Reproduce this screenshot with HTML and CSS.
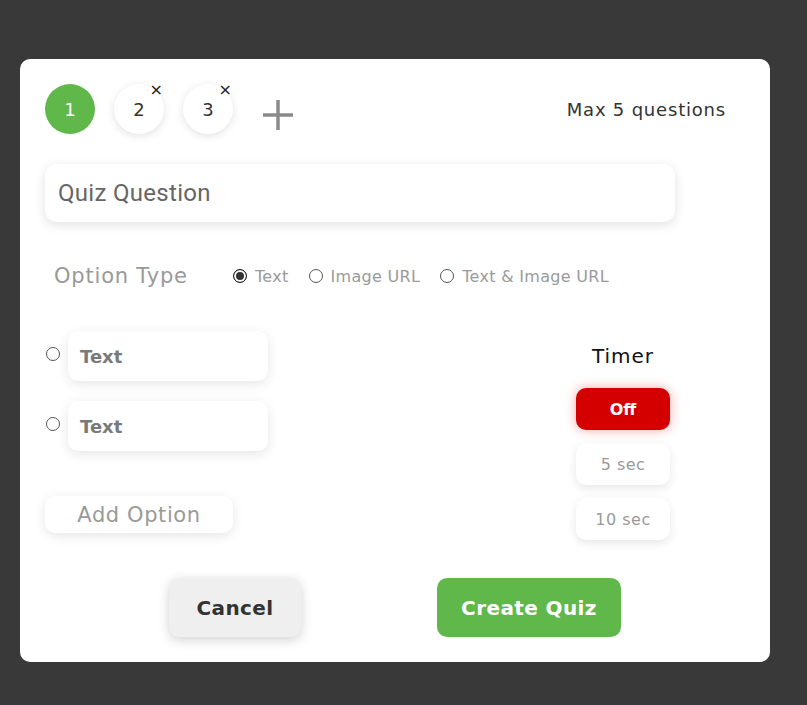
FILE: index.html
```html
<!DOCTYPE html>
<html>
<head>
<meta charset="utf-8">
<link rel="stylesheet" href="styles.css">
</head>
<body>
<div class="card">
  <div class="head">
    <div class="tabs">
      <div class="tab active">1</div>
      <div class="tab">2<span class="x">×</span></div>
      <div class="tab">3<span class="x">×</span></div>
      <div class="plus"><svg width="34" height="34" viewBox="0 0 34 34"><path d="M17 2V32M2 17H32" stroke="#8a8a8a" stroke-width="3.5"/></svg></div>
    </div>
    <div class="max">Max 5 questions</div>
  </div>
  <div class="question">Quiz Question</div>
  <div class="otype">
    <div class="olabel">Option Type</div>
    <div class="radios">
      <span class="r"><span class="dot checked"></span>Text</span>
      <span class="r"><span class="dot"></span>Image URL</span>
      <span class="r"><span class="dot"></span>Text &amp; Image URL</span>
    </div>
  </div>
  <div class="body">
    <div class="options">
      <div class="opt"><span class="dot"></span><div class="oin">Text</div></div>
      <div class="opt"><span class="dot"></span><div class="oin">Text</div></div>
      <div class="add">Add Option</div>
    </div>
    <div class="timer">
      <div class="ttitle">Timer</div>
      <div class="tb on">Off</div>
      <div class="tb">5 sec</div>
      <div class="tb">10 sec</div>
    </div>
  </div>
  <div class="actions">
    <div class="cancel">Cancel</div>
    <div class="create">Create Quiz</div>
  </div>
</div>
</body>
</html>
```
FILE: styles.css
```css
* { box-sizing: border-box; }
html, body { margin: 0; padding: 0; }
body {
  background: #393939;
  width: 807px;
  height: 705px;
  overflow: hidden;
  font-family: "DejaVu Sans", "Open Sans", sans-serif;
}
.card {
  margin: 59px 0 0 20px;
  width: 750px;
  height: 603px;
  background: #fff;
  border-radius: 10px;
  padding: 25px 44px 25px 25px;
}
.head {
  display: flex;
  justify-content: space-between;
  align-items: center;
  height: 50px;
}
.tabs { display: flex; align-items: center; gap: 19px; }
.tab {
  position: relative;
  width: 50px; height: 50px;
  border-radius: 50%;
  background: #fff;
  box-shadow: 0 2px 8px rgba(0,0,0,0.12);
  display: flex; align-items: center; justify-content: center;
  font-size: 18px; color: #333;
}
.tab.active { background: #60b84b; color: #fff; box-shadow: none; }
.x {
  position: absolute;
  top: -2px; right: 1px;
  font-size: 16px; color: #222; line-height: 16px;
}
.plus { margin-left: 9px; margin-top: 12px; display: flex; }
.max { font-size: 18px; letter-spacing: 0.8px; color: #333; }
.question {
  margin-top: 30px;
  width: 630px; height: 58px;
  border-radius: 12px;
  box-shadow: 0 3px 12px rgba(0,0,0,0.12);
  padding-left: 13px;
  display: flex; align-items: center;
  font-family: Roboto, sans-serif;
  font-size: 24px; letter-spacing: 0.3px; color: #666;
}
.otype {
  margin-top: 40px;
  display: flex; align-items: center;
  padding-left: 9px;
  height: 28px;
}
.olabel { font-size: 21px; letter-spacing: 0.8px; color: #9a9a9a; width: 179px; }
.radios { display: flex; gap: 20px; font-size: 16px; letter-spacing: 0.3px; color: #9a9a9a; }
.r { display: flex; align-items: center; gap: 8px; }
.dot {
  display: inline-block;
  width: 14px; height: 14px;
  border-radius: 50%;
  border: 1px solid #555;
  background: #fff;
  flex: none;
}
.dot.checked { border: 1.5px solid #222; box-shadow: inset 0 0 0 2px #fff; background: #333; }
.body {
  margin-top: 41px;
  display: flex;
  justify-content: space-between;
}
.options { display: flex; flex-direction: column; }
.opt { display: flex; align-items: flex-start; gap: 8px; margin-left: 1px; margin-bottom: 20px; }
.opt .dot { margin-top: 16px; }
.oin {
  width: 200px; height: 50px;
  border-radius: 10px;
  box-shadow: 0 3px 12px rgba(0,0,0,0.1);
  display: flex; align-items: center;
  padding-left: 12px;
  font-size: 18px; font-weight: 600; color: #7a7a7a;
}
.add {
  margin-top: 25px;
  width: 188px; height: 37px;
  border-radius: 10px;
  box-shadow: 0 3px 12px rgba(0,0,0,0.1);
  display: flex; align-items: center; justify-content: center;
  font-size: 21px; letter-spacing: 0.6px; color: #9a9a9a;
}
.timer {
  width: 94px;
  margin-right: 56px;
  display: flex; flex-direction: column; align-items: center; gap: 13px;
}
.ttitle { font-size: 20px; letter-spacing: 1px; color: #111; height: 50px; line-height: 50px; margin-bottom: -6px; }
.tb {
  width: 94px; height: 42px;
  border-radius: 10px;
  background: #fff;
  box-shadow: 0 3px 10px rgba(0,0,0,0.1);
  display: flex; align-items: center; justify-content: center;
  font-size: 16px; letter-spacing: 0.5px; color: #9a9a9a;
}
.tb.on { background: #d40000; color: #fff; font-weight: 700; letter-spacing: 0; box-shadow: 0 0 12px rgba(230,0,0,0.35); }
.actions {
  margin-top: 38px;
  display: flex;
  padding-left: 124px;
  gap: 136px;
}
.cancel, .create {
  height: 59px;
  border-radius: 10px;
  display: flex; align-items: center; justify-content: center;
  font-size: 20px; font-weight: 700; letter-spacing: 0.4px;
}
.cancel { width: 132px; background: #efefef; color: #333; box-shadow: 0 3px 12px rgba(0,0,0,0.18); }
.create { width: 184px; background: #60b84b; color: #fff; }
```
